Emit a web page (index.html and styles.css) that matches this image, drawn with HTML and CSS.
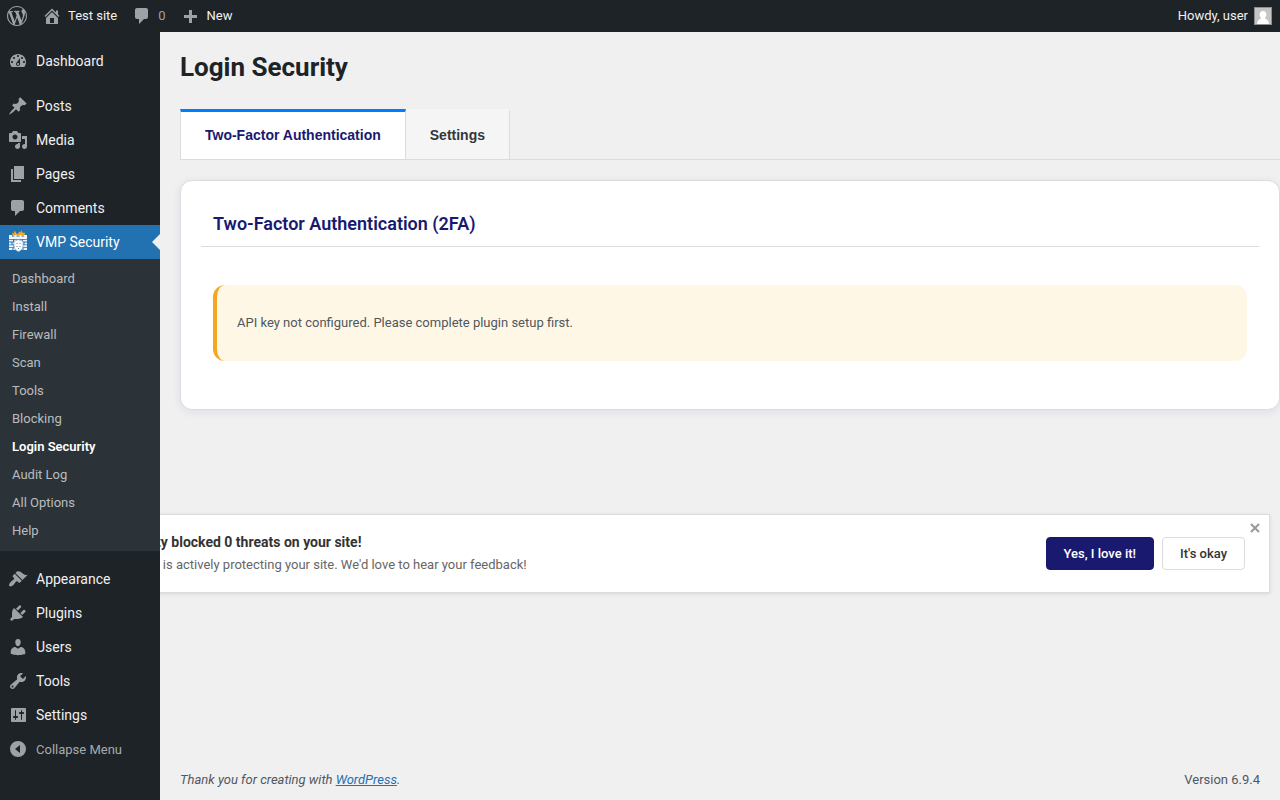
FILE: index.html
```html
<!DOCTYPE html>
<html lang="en">
<head>
  <meta charset="UTF-8" />
  <meta name="viewport" content="width=device-width, initial-scale=1.0"/>
  <title>Login Security</title>
  <link rel="stylesheet" href="styles.css">
</head>
<body>

  <!-- Admin bar -->
  <header class="adminbar">
    <a class="bar-item" href="#" aria-label="About WordPress">
      <svg class="icon" viewBox="0 0 20 20"><path d="M20 10c0-5.51-4.49-10-10-10C4.48 0 0 4.49 0 10c0 5.52 4.48 10 10 10 5.51 0 10-4.48 10-10zM7.78 15.37L4.37 6.22c.55-.02 1.17-.08 1.17-.08.5-.06.44-1.13-.06-1.11 0 0-1.45.11-2.37.11-.18 0-.37 0-.58-.01C4.12 2.69 6.87 1.11 10 1.11c2.33 0 4.45.87 6.05 2.34-.68-.11-1.65.39-1.65 1.58 0 .74.45 1.36.9 2.1.35.61.55 1.36.55 2.46 0 1.49-1.4 5-1.4 5l-3.03-8.37c.54-.02.82-.17.82-.17.5-.05.44-1.25-.06-1.22 0 0-1.44.12-2.38.12-.87 0-2.33-.12-2.33-.12-.5-.03-.56 1.2-.06 1.22l.92.08 1.26 3.41zM17.41 10c.24-.64.74-1.87.43-4.25.7 1.29 1.05 2.71 1.05 4.25 0 3.29-1.73 6.24-4.4 7.78.97-2.59 1.94-5.2 2.92-7.78zM6.1 18.09C3.12 16.65 1.11 13.53 1.11 10c0-1.3.23-2.48.72-3.59C3.25 10.3 4.67 14.2 6.1 18.09zm4.03-6.63l2.58 6.98c-.86.29-1.76.45-2.71.45-.79 0-1.57-.11-2.29-.33.81-2.38 1.62-4.74 2.42-7.1z"/></svg>
    </a>
    <a class="bar-item" href="#">
      <svg class="icon" viewBox="0 0 20 20"><path d="M16 8.5l1.53 1.53-1.06 1.06L10 4.6l-6.47 6.49-1.06-1.06L10 2.5l4 4v-2h2v4zm-6-2.46l6 5.99V18H4v-5.97zM12 17v-5H8v5h4z"/></svg>
      Test site
    </a>
    <a class="bar-item muted" href="#">
      <svg class="icon" viewBox="0 0 20 20"><path d="M5 2h9c1.1 0 2 .9 2 2v7c0 1.1-.9 2-2 2h-2l-5 5v-5H5c-1.1 0-2-.9-2-2V4c0-1.1.9-2 2-2z"/></svg>
      0
    </a>
    <a class="bar-item" href="#">
      <svg class="icon" viewBox="0 0 20 20"><path d="M16 9v3h-5v5H8v-5H3V9h5V4h3v5h5z"/></svg>
      New
    </a>
    <a class="bar-item account" href="#">
      Howdy, user
      <svg class="avatar" viewBox="0 0 16 16"><rect width="16" height="16" fill="#c5c5c5"/><path fill="#fff" d="M8 3c2.100 0 3.400 1.500 3.400 3.600 0 1.500-.7 2.700-1.600 3.300.2.900 3.800 1.200 4.200 6.100H2c.4-4.900 4-5.200 4.200-6.100-.9-.6-1.600-1.800-1.600-3.300C4.600 4.500 5.900 3 8 3z"/></svg>
    </a>
  </header>

  <div class="layout">
    <!-- Side menu -->
    <nav class="sidebar">
      <a class="menu-item" href="#">
        <svg class="icon" viewBox="0 0 20 20"><path d="M3.760 16h12.480c1.100-1.370 1.760-3.110 1.760-5 0-4.420-3.580-8-8-8s-8 3.580-8 8c0 1.890.66 3.630 1.760 5zM10 4c.55 0 1 .45 1 1s-.45 1-1 1-1-.45-1-1 .45-1 1-1zM6 6c.55 0 1 .45 1 1s-.45 1-1 1-1-.45-1-1 .45-1 1-1zm8 0c.55 0 1 .45 1 1s-.45 1-1 1-1-.45-1-1 .45-1 1-1zm-5.370 5.550L12 7v6c0 1.100-.9 2-2 2s-2-.9-2-2c0-.57.24-1.080.63-1.450zM4 10c.55 0 1 .45 1 1s-.45 1-1 1-1-.45-1-1 .45-1 1-1zm12 0c.55 0 1 .45 1 1s-.45 1-1 1-1-.45-1-1 .45-1 1-1zm-5 3c0-.55-.45-1-1-1s-1 .45-1 1 .45 1 1 1 1-.45 1-1z"/></svg>
        Dashboard
      </a>
      <div class="separator"></div>
      <a class="menu-item" href="#">
        <svg class="icon" viewBox="0 0 20 20"><path d="M10.440 3.020l1.820-1.820 6.360 6.350-1.830 1.820c-1.050-.68-2.480-.57-3.410.36l-.75.75c-.92.93-1.040 2.350-.35 3.410l-1.830 1.820-2.410-2.410-2.800 2.790c-.42.42-3.380 2.710-3.800 2.290s1.860-3.390 2.280-3.810l2.790-2.790L4.100 9.360l1.830-1.820c1.050.69 2.480.57 3.400-.36l.75-.75c.93-.92 1.050-2.350.36-3.410z"/></svg>
        Posts
      </a>
      <a class="menu-item" href="#">
        <svg class="icon" viewBox="0 0 20 20"><path d="M13 11V4c0-.55-.45-1-1-1h-1.670L9 1H5L3.670 3H2c-.55 0-1 .45-1 1v7c0 .55.45 1 1 1h10c.55 0 1-.45 1-1zM7 4.500c1.380 0 2.500 1.120 2.500 2.500S8.380 9.500 7 9.500 4.500 8.380 4.500 7 5.620 4.500 7 4.500zM14 6h5v10.500c0 1.380-1.120 2.500-2.500 2.500S14 17.880 14 16.500s1.120-2.500 2.500-2.500c.17 0 .34.02.5.05V9h-3V6zm-4 8.050V13h2v3.500c0 1.380-1.120 2.500-2.500 2.500S7 17.880 7 16.500 8.120 14 9.500 14c.17 0 .34.02.5.05z"/></svg>
        Media
      </a>
      <a class="menu-item" href="#">
        <svg class="icon" viewBox="0 0 20 20"><path d="M6 15V2h10v13H6zm-1 1h8v2H3V5h2v11z"/></svg>
        Pages
      </a>
      <a class="menu-item" href="#">
        <svg class="icon" viewBox="0 0 20 20"><path d="M5 2h9c1.100 0 2 .9 2 2v7c0 1.100-.9 2-2 2h-2l-5 5v-5H5c-1.100 0-2-.9-2-2V4c0-1.100.9-2 2-2z"/></svg>
        Comments
      </a>
      <a class="menu-item current" href="#">
        <svg class="icon" viewBox="0 0 20 20">
          <path fill="#f5a623" d="M4.500 4L4.300.5 6 1.500 6.500-1.500 8 .5 8.800 2l1.700-.5L11-.5l1.500 1L13-2l1.500 2.500 1 .5 1-.8L17 4z"/>
          <path fill="#f0f4fa" d="M1 3h3v1.500h2.500V3h2v1.500h3V3h2v1.500H16V3h3v4H1zM1 7.800h4v1.800H1zm5 0h8v1.800H6zm9 0h4v1.800h-4zM1 10.400h2.500v2H1zm3.500 0h3v2h-3zm8 0h3v2h-3zm4 0H19v2h-2.500zM1 13.200h4.500v2H1zm13.500 0H19v2h-4.500zM1 16h3.500v2.100H1zm4.500 0h2v2.100h-2zm7 0h2v2.100h-2zm3 0H19v2.100h-3.500z"/>
          <path fill="#fff" stroke="#6f97c4" stroke-width=".6" d="M10.500 7.500c1.500 1 3 1.400 4.500 1.500v5c0 2.700-2 4.700-4.500 5.700C8 18.700 6 16.700 6 14V9c1.500-.1 3-.5 4.500-1.500z"/>
          <path fill="#5c7fae" d="M8.500 11h1v1h-1zm3 0h1v1h-1zm-3 3h1v1h-1zm3 0h1v1h-1zM10 16h1v1h-1z"/>
        </svg>
        VMP Security
      </a>
      <div class="submenu">
        <a href="#">Dashboard</a>
        <a href="#">Install</a>
        <a href="#">Firewall</a>
        <a href="#">Scan</a>
        <a href="#">Tools</a>
        <a href="#">Blocking</a>
        <a class="active" href="#">Login Security</a>
        <a href="#">Audit Log</a>
        <a href="#">All Options</a>
        <a href="#">Help</a>
      </div>
      <div class="separator"></div>
      <a class="menu-item" href="#">
        <svg class="icon" viewBox="0 0 20 20"><path d="M14.480 11.060L7.410 3.990l1.500-1.500c.5-.56 2.300-.47 3.510.32 1.210.8 1.430 1.280 2.910 2.100 1.180.64 2.450 1.260 4.450.85zm-.71.71L6.700 4.700 4.930 6.470c-.39.39-.39 1.020 0 1.410l1.060 1.060c.39.39.39 1.030 0 1.420-.6.6-1.430 1.110-2.210 1.690-.35.26-.7.53-1.010.84C1.430 14.230.4 16.080 1.400 17.070c.99 1 2.840-.03 4.180-1.360.31-.31.58-.66.85-1.020.57-.78 1.080-1.610 1.690-2.210.39-.39 1.020-.39 1.410 0l1.060 1.060c.39.39 1.020.39 1.410 0z"/></svg>
        Appearance
      </a>
      <a class="menu-item" href="#">
        <svg class="icon" viewBox="0 0 20 20"><path d="M13.110 4.360L9.870 7.600 8 5.730l3.240-3.240c.35-.34 1.050-.2 1.560.32.52.51.66 1.210.31 1.550zm-8 1.770l.91-1.120 9.010 9.010-1.190.84c-.71.71-2.630 1.160-3.820 1.160H6.140L4.900 17.260c-.59.59-1.540.59-2.120 0-.59-.58-.59-1.530 0-2.120l1.240-1.240v-3.880c0-1.130.4-3.190 1.090-3.890zm7.260 3.970l3.240-3.240c.34-.35 1.040-.21 1.550.31.52.51.66 1.210.31 1.550l-3.240 3.250z"/></svg>
        Plugins
      </a>
      <a class="menu-item" href="#">
        <svg class="icon" viewBox="0 0 20 20"><path d="M10 9.250c-2.270 0-2.730-3.440-2.730-3.440C7 4.020 7.820 2 9.970 2c2.160 0 2.980 2.020 2.710 3.810 0 0-.41 3.440-2.680 3.440zm0 2.570L12.720 10c2.390 0 4.520 2.330 4.520 4.530v2.490s-3.650 1.130-7.240 1.130c-3.650 0-7.240-1.130-7.240-1.130v-2.490c0-2.250 1.940-4.480 4.470-4.480z"/></svg>
        Users
      </a>
      <a class="menu-item" href="#">
        <svg class="icon" viewBox="0 0 20 20"><path d="M16.680 9.770c-1.340 1.340-3.300 1.670-4.950.99l-5.410 6.520c-.99.99-2.590.99-3.580 0s-.99-2.590 0-3.570l6.520-5.420c-.68-1.650-.35-3.610.99-4.950 1.280-1.280 3.120-1.620 4.720-1.060l-2.890 2.890 2.820 2.820 2.860-2.870c.53 1.580.18 3.390-1.080 4.650zM3.810 16.210c.4.39 1.040.39 1.430 0 .4-.4.4-1.040 0-1.430-.39-.4-1.030-.4-1.430 0-.39.39-.39 1.030 0 1.430z"/></svg>
        Tools
      </a>
      <a class="menu-item" href="#">
        <svg class="icon" viewBox="0 0 20 20"><path d="M18 16V4c0-.55-.45-1-1-1H4c-.55 0-1 .45-1 1v12c0 .55.45 1 1 1h13c.55 0 1-.45 1-1zM8 11h1c.55 0 1 .45 1 1s-.45 1-1 1H8v1.500c0 .28-.22.5-.5.5s-.5-.22-.5-.5V13H6c-.55 0-1-.45-1-1s.45-1 1-1h1V5.500c0-.28.22-.5.5-.5s.5.22.5.5V11zm5-2h-1c-.55 0-1-.45-1-1s.45-1 1-1h1V5.500c0-.28.22-.5.5-.5s.5.22.5.5V7h1c.55 0 1 .45 1 1s-.45 1-1 1h-1v5.500c0 .28-.22.5-.5.5s-.5-.22-.5-.5V9z"/></svg>
        Settings
      </a>
      <button class="menu-item collapse" type="button">
        <svg class="icon" viewBox="0 0 20 20"><path fill-rule="evenodd" d="M10 2a8 8 0 1 1 0 16 8 8 0 0 1 0-16zm2 12V6l-5 4z"/></svg>
        Collapse Menu
      </button>
    </nav>

    <div class="content">
      <main class="page">
        <h1>Login Security</h1>

        <div class="tabs">
          <button class="tab selected" type="button">Two-Factor Authentication</button>
          <button class="tab" type="button">Settings</button>
        </div>

        <section class="card">
          <h2>Two-Factor Authentication (2FA)</h2>
          <div class="alert">API key not configured. Please complete plugin setup first.</div>
        </section>
      </main>

      <!-- Review notice, runs under the side menu -->
      <div class="notice">
        <div class="notice-text">
          <strong>VMP Security blocked 0 threats on your site!</strong>
          <span>VMP Security is actively protecting your site. We'd love to hear your feedback!</span>
        </div>
        <button class="btn primary" type="button">Yes, I love it!</button>
        <button class="btn" type="button">It's okay</button>
        <button class="close" type="button" aria-label="Dismiss">
          <svg viewBox="0 0 10 10"><path d="M1 1l8 8M9 1L1 9"/></svg>
        </button>
      </div>

      <footer class="footer">
        <em>Thank you for creating with <a href="#">WordPress</a>.</em>
        <span>Version 6.9.4</span>
      </footer>
    </div>
  </div>

</body>
</html>
```

FILE: styles.css
```css
* {
  box-sizing: border-box;
}

body {
  margin: 0;
  min-height: 100vh;
  display: flex;
  flex-direction: column;
  background: #f0f0f1;
  color: #3c434a;
  font-family: Roboto, "Open Sans", sans-serif;
  font-size: 13px;
  line-height: 18px;
}

button {
  font-family: inherit;
  cursor: pointer;
}

.icon {
  width: 20px;
  height: 20px;
  flex: none;
  fill: #9ca2a7;
  overflow: visible;
}

/* Admin bar */
.adminbar {
  display: flex;
  height: 32px;
  padding: 0 8px 0 7px;
  gap: 15px;
  background: #1d2327;
}

.bar-item {
  display: flex;
  align-items: center;
  gap: 6px;
  color: #f0f0f1;
  text-decoration: none;
}

.bar-item.muted {
  color: #9ca2a7;
}

.account {
  margin-left: auto;
}

.avatar {
  width: 18px;
  height: 18px;
  border: 1px solid #8c8f94;
}

.layout {
  flex: 1;
  display: flex;
}

/* Side menu */
.sidebar {
  position: relative;
  z-index: 2;
  width: 160px;
  flex: none;
  padding-top: 12px;
  background: #1d2327;
}

.menu-item {
  position: relative;
  display: flex;
  align-items: center;
  gap: 8px;
  height: 34px;
  padding: 0 8px;
  color: #f0f0f1;
  font-size: 14px;
  text-decoration: none;
}

.menu-item.current {
  background: #2271b1;
  color: #fff;
}

.menu-item.current::after {
  content: "";
  position: absolute;
  right: 0;
  top: 9px;
  border: 8px solid transparent;
  border-right-color: #f0f0f1;
  border-left-width: 0;
}

.separator {
  height: 11px;
}

.submenu {
  padding: 6px 0;
  background: #2c3338;
}

.submenu a {
  display: block;
  padding: 5px 12px;
  color: #b9bcbf;
  text-decoration: none;
}

.submenu a.active {
  color: #fff;
  font-weight: 600;
}

.collapse {
  width: 100%;
  border: none;
  background: none;
  color: #a7aaad;
  font-size: 13px;
}

/* Page */
.content {
  flex: 1;
  min-width: 0;
  display: flex;
  flex-direction: column;
}

.page {
  padding: 20px 0 0 20px;
}

h1 {
  margin: 0 0 26px;
  color: #1d2327;
  font-size: 26px;
  font-weight: 700;
  line-height: 31px;
}

.tabs {
  display: flex;
  border-bottom: 1px solid #dcdcde;
}

.tab {
  height: 50px;
  padding: 0 24px 2px;
  border: 0 solid #dcdcde;
  border-top: 3px solid #f5f5f5;
  border-right-width: 1px;
  background: #f5f5f5;
  color: #32373c;
  font-family: "Liberation Sans", Arial, sans-serif;
  font-size: 14px;
  font-weight: 600;
}

.tab.selected {
  border-left-width: 1px;
  border-top-color: #007cff;
  background: #fff;
  color: #191970;
}

.card {
  margin-top: 20px;
  padding: 20px 20px 48px;
  border: 1px solid #dcdcde;
  border-radius: 12px;
  background: #fff;
  box-shadow: 0 2px 10px rgba(25, 25, 112, 0.08);
}

h2 {
  margin: 0 0 38px;
  padding: 10px 12px;
  border-bottom: 1px solid #dcdcde;
  color: #191970;
  font-size: 18px;
  font-weight: 600;
  line-height: 25px;
}

.alert {
  margin: 0 12px;
  padding: 29px 20px;
  border-left: 4px solid #f5a623;
  border-radius: 12px;
  background: #fff7e5;
  color: #50575e;
}

/* Review notice */
.notice {
  position: relative;
  display: flex;
  align-items: center;
  gap: 8px;
  margin: 104px 10px 0 -103px;
  padding: 18px 24px;
  border: 1px solid #dcdcde;
  background: #fff;
  box-shadow: 0 1px 4px rgba(0, 0, 0, 0.1);
}

.notice-text {
  flex: 1;
  display: flex;
  flex-direction: column;
  gap: 5px;
  color: #666;
}

.notice-text strong {
  color: #333;
  font-size: 14px;
}

.btn {
  height: 33px;
  padding: 0 17px;
  border: 1px solid #dcdcde;
  border-radius: 4px;
  background: #fff;
  color: #333;
  font-size: 13px;
  font-weight: 500;
}

.btn.primary {
  border-color: #191970;
  background: #191970;
  color: #fff;
}

.close {
  position: absolute;
  top: 8px;
  right: 9px;
  display: flex;
  padding: 0;
  border: none;
  background: none;
}

.close svg {
  width: 10px;
  height: 10px;
  stroke: #999;
  stroke-width: 2;
}

.footer {
  display: flex;
  justify-content: space-between;
  margin-top: auto;
  padding: 12px 20px 11px;
  color: #50575e;
}

.footer a {
  color: #2271b1;
}
```
